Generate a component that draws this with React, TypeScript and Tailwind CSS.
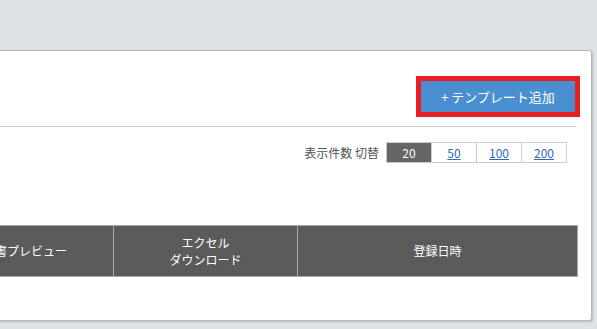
const pageSizes = ["20", "50", "100", "200"];

export default function App() {
  return (
    <div
      className="h-[329px] w-[597px] overflow-hidden bg-[#dfe2e5] pt-[50px]"
      style={{ fontFamily: '"Noto Sans CJK JP", "Noto Sans", sans-serif' }}
    >
      <div className="ml-[-92px] h-[271px] w-[684px] rounded-br-[3px] rounded-tr-[3px] border border-[#b4b7ba] bg-white px-[15px] shadow-[1px_1px_2px_rgba(0,0,0,0.18)]">
        <div className="mr-[-4px] flex justify-end pt-[25px]">
          <div className="border-[5px] border-[#e81d25]">
            <button className="flex h-[31px] w-[154px] items-center justify-center bg-[#4a8fcf] text-[13px] text-white">
              + テンプレート追加
            </button>
          </div>
        </div>
        <div className="mt-[9px] border-t border-[#cccccc]" />

        <div className="mt-[15px] flex items-center justify-end pr-[9px]">
          <span className="mr-[7px] text-[12px] text-[#555]">表示件数 切替</span>
          <div className="flex border border-[#cccccc]">
            {pageSizes.map((size, i) => (
              <span
                key={size}
                className={
                  i === 0
                    ? "flex h-[19px] w-[44px] items-center justify-center bg-[#666] text-[12px] text-white"
                    : "flex h-[19px] w-[45px] items-center justify-center border-l border-[#cccccc] text-[12px] text-[#2a6cb8] underline"
                }
              >
                {size}
              </span>
            ))}
          </div>
        </div>

        <table className="mt-[62px] w-[654px] table-fixed border-collapse text-[12px] text-white">
          <thead>
            <tr className="h-[51px] bg-[#5b5b5b]">
              <th className="w-[189px] border border-[#aaaaaa] font-normal">請求書プレビュー</th>
              <th className="w-[184px] border border-[#aaaaaa] font-normal leading-[17px]">
                <span className="block">エクセル</span>
                <span className="block">ダウンロード</span>
              </th>
              <th className="border border-[#aaaaaa] font-normal">登録日時</th>
            </tr>
          </thead>
        </table>
      </div>
    </div>
  );
}
